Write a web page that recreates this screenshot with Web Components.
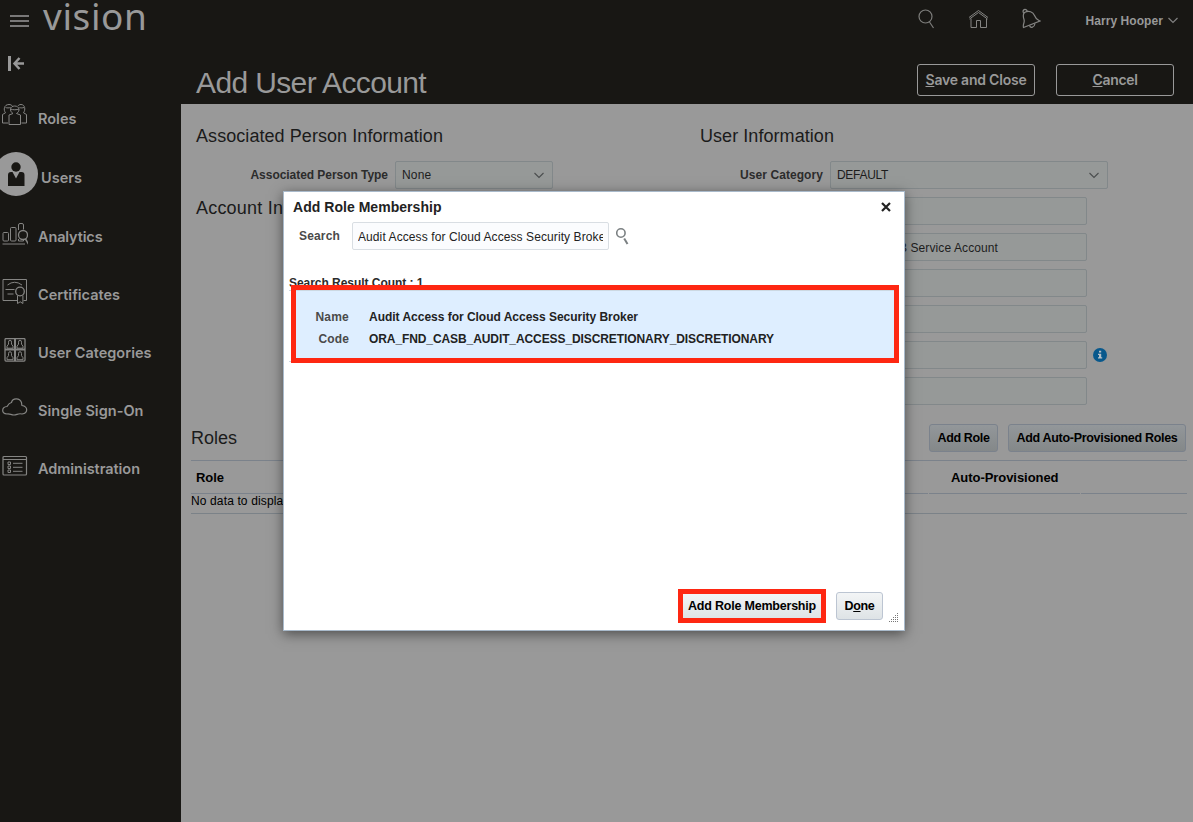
<!DOCTYPE html>
<html lang="en"><head><meta charset="utf-8"><title>Add User Account</title>
<style>
html,body{margin:0;height:100%;overflow:hidden;background:#181714}
body{font-family:"Liberation Sans",Arial,sans-serif;font-size:12px;color:#1b1b1b}
</style></head><body>
<security-console></security-console>
<script>
const define=(name,html,setup)=>customElements.define(name,class extends HTMLElement{
  connectedCallback(){
    if(this.shadowRoot)return;
    const t=document.createElement('template');t.innerHTML=typeof html==='function'?html(this):html;
    this.attachShadow({mode:'open'}).appendChild(t.content.cloneNode(true));
    if(setup)setup(this);
  }
});

/* A single-line label whose tracking is adjusted to a given width */
define('fit-text','<style>:host{display:inline-block;white-space:nowrap}span{display:inline-block}</style><span><slot></slot></span>',el=>{
  const w=parseFloat(el.getAttribute('w'));
  const s=el.shadowRoot.querySelector('span'),n=el.textContent.length;
  const nat=s.getBoundingClientRect().width;
  if(w&&nat){s.style.letterSpacing=((w-nat)/n)+'px';el.style.width=w+'px'}
});

const svg=(w,h,body,extra='')=>`<svg width="${w}" height="${h}" viewBox="0 0 ${w} ${h}" fill="none" stroke="#858583" stroke-width="1" stroke-linejoin="round" ${extra}>${body}</svg>`;
const person=(x,y)=>`<path d="M${x+2.500} ${y+4.5}V${y+2.5}a1.500 2 0 0 1 3 0V${y+4.5}L${x+7} ${y+6.500}V${y+8.500}H${x+1}V${y+6.500}Z"/>`;
const icons={
  roles:svg(28,24,'<path d="M7 21H1.500V12.500L4.500 10.800C2.300 8 2.800 2.500 8 2.500c1.600 0 2.700.6 3.300 1.500M20.500 21H25.500V12.500L22.500 10.800C24.700 8 24.200 2.500 20 2.500c-1.600 0-2.500.6-3 1.500"/><path d="M12 11.500C8 9 9 4 13.700 4s6 5 1.800 7.500l4 1.500v9.500H8V13Z"/><path d="M9.500 7c2 1 6.500 1 8.500 0M4.500 5.500c1.500.6 3.500.5 5 0M18.500 5.500c1.500.6 3 .5 4.500 0"/>'),
  analytics:svg(28,24,'<rect x="3" y="11.500" width="5.500" height="8.500" rx="1"/><rect x="10.500" y="6.500" width="5.500" height="13.500" rx="1"/><path d="M18.500 9V4q0-1.500 1.500-1.500h2q1.500 0 1.500 1.500v4.500M18.500 18v2h5v-1M2.500 23H25"/><circle cx="23" cy="14" r="4.500" stroke-width="1.300"/><path d="m25.500 18 3 5" stroke-width="1.500"/>'),
  certificates:svg(28,27,'<path d="M17 22.500H3V1.500H26.500v21H23.500"/><path d="M7.500 7q7-5.500 14.500 0M5.500 11.500h9M7.500 16h6"/><circle cx="20" cy="13.500" r="4.300" stroke-width="1.300"/><path d="M17.500 17.500v8l2.700-1.700 2.700 1.700v-8"/>'),
  categories:svg(28,24,'<rect x="5" y=".6" width="20" height="22.500" rx="1" stroke-width="1.300"/><path d="M15 1v22M5 11.500h20" stroke-width="2"/>'+person(6,1.700)+person(16,1.700)+person(6,13.200)+person(16,13.200)),
  cloud:svg(28,22,'<path d="M7 18C1 17.500 1.500 11 7 10.500 8.500 8 9 7 11.500 6.500 12.500 2 19.500 1.500 21.500 6.500c.3 1.500 0 2 .5 3 6 1 6.500 7.500 0 8.500-4-1-5 1-8 1s-4-1.500-7-1Z" stroke-width="1.200"/>'),
  admin:svg(28,22,'<rect x="3" y="1.500" width="23.500" height="18.500" rx="1" stroke-width="1.200"/><path d="M3 4.500h23.500"/><rect x="8" y="7" width="2.500" height="2.500"/><rect x="8" y="11" width="2.500" height="2.500"/><rect x="8" y="15" width="2.500" height="2.500"/><path d="M13 8.300h9.500M13 12.300h9.500M13 16.300h9.500"/>'),
  users:'<svg width="38" height="44" viewBox="0 0 38 44"><circle cx="16" cy="22" r="22" fill="#999"/><circle cx="16" cy="15" r="4.700" fill="#181714"/><path d="M8 34V23q0-3 3-3h1.500l3.500 6.500L19.500 20H21.500q3 0 3 3v11Z" fill="#181714"/></svg>'
};

define('nav-item',el=>`<style>
:host{display:grid;grid-template-columns:38px auto;justify-content:start;align-items:center;height:58.300px;color:#999;font:600 14.500px/20px Inter,"Open Sans",sans-serif}
.i{display:flex;margin-top:-6px}svg{display:block}:host([icon=users]) .t{padding:1px 0 0 3px}:host([icon=users]) .i{margin-top:-7px}:host([icon=roles]) .i{margin:-11px 0 0 1px}
:host([icon=roles]) .t{margin-top:-2px}:host([icon=analytics]) .t{margin-top:2px}:host([icon=cloud]) .i{margin-top:-8px}
</style><span class="i">${icons[el.getAttribute('icon')]}</span><span class="t"><slot></slot></span>`);

define('side-nav',`<style>
:host{display:block;width:181px}
.c{display:block;height:16px;margin:14px 0 0 8px}nav{padding-top:19.500px}
</style>
<svg class="c" width="17" height="16" viewBox="0 0 17 16" fill="none" stroke="#999"><path d="M1.500 1v15" stroke-width="3"/><path d="M16 8.500H7M11.500 3 6.500 8.500l5 5.500" stroke-width="2.500"/></svg>
<nav>
<nav-item icon="roles"><fit-text w="38.500">Roles</fit-text></nav-item>
<nav-item icon="users"><fit-text w="41">Users</fit-text></nav-item>
<nav-item icon="analytics"><fit-text w="64.500">Analytics</fit-text></nav-item>
<nav-item icon="certificates"><fit-text w="82">Certificates</fit-text></nav-item>
<nav-item icon="categories"><fit-text w="113.500">User Categories</fit-text></nav-item>
<nav-item icon="cloud"><fit-text w="105.500">Single Sign-On</fit-text></nav-item>
<nav-item icon="admin"><fit-text w="102">Administration</fit-text></nav-item>
</nav>`);

define('top-bar',`<style>
:host{display:flex;align-items:center;height:41px;padding:0 15px 0 10px;box-sizing:border-box;color:#999}
svg{display:block;flex:none}.logo{font:400 37px/32px "Noto Sans","Open Sans",sans-serif;margin:-9px auto 0 14px}
.search{margin:-4px 32px 0 0}.home{margin:-4px 32px 0 0}.bell{margin:-5px 45px 0 0}.user{font-weight:700;font-size:12px;margin-right:5px}
</style>
<svg width="19" height="14" viewBox="0 0 19 14" stroke="#999" stroke-width="1.500"><path d="M0 2h19M0 7h19M0 12h19"/></svg>
<div class="logo"><fit-text w="104.500">vision</fit-text></div>
<svg class="search" width="18" height="20" viewBox="0 0 18 20" fill="none" stroke="#7d7d7b" stroke-width="1.200"><circle cx="7.500" cy="7.500" r="6.500"/><path d="m11.500 13 4 6"/></svg>
<svg class="home" width="21" height="20" viewBox="0 0 21 20" fill="none" stroke="#858583"><path d="M1 8.500 10.500 1.500 20 8.500M1.500 10 10.500 3.500 19.500 10M3 9.500V18.500H8.500V11.500H12.500V18.500H18.500V9.500"/></svg>
<svg class="bell" width="20" height="21" viewBox="0 0 20 21" fill="none" stroke="#858583" stroke-width="1.200"><path d="M3.500 4.500C8 2 12 4 13.500 7.500c1.500 4 2.500 4 5.500 5.500L2.500 19.500C1.500 16 4 15 3 11.500 2 8.500 1.500 6.500 3.500 4.500Z"/><path d="M2.500 5C1 2 4.500-.5 6.500 3.500M8.500 17.500c1 3 5 2 5.500-2"/></svg>
<div class="user"><fit-text w="77.500">Harry Hooper</fit-text></div>
<svg width="10" height="7" viewBox="0 0 10 7" fill="none" stroke="#808080" stroke-width="1.200"><path d="m.5 1 4.500 4.500L9.500 1"/></svg>`);

define('outline-button',`<style>:host{display:flex;align-items:center;justify-content:center;width:118px;height:32px;box-sizing:border-box;border:1px solid #999;border-radius:3px;color:#999;font:600 14px/20px Inter,sans-serif}</style><slot></slot>`);
define('title-bar',`<style>
:host{display:flex;align-items:flex-start;height:63px;padding:0 19px 0 15px;box-sizing:border-box;color:#999;background:#181714}
h1{font:400 30px/36px "Liberation Sans",sans-serif;margin:24px auto 0 0}
.b{display:flex;gap:21px;margin-top:23px}
</style><h1><fit-text w="230">Add User Account</fit-text></h1><div class="b"><outline-button><fit-text w="101"><u>S</u>ave and Close</fit-text></outline-button><outline-button><fit-text w="45"><u>C</u>ancel</fit-text></outline-button></div>`);

define('field-box',el=>`<style>
:host{display:flex;align-items:center;justify-content:space-between;box-sizing:border-box;height:28px;border:1px solid #82888a;border-radius:2px;background:#969998;padding:0 7px 0 6px;color:#1d1d1d;font-size:12px}
svg{display:block}</style><slot></slot>${el.hasAttribute('select')?'<svg width="12" height="8" viewBox="0 0 12 8" fill="none" stroke="#4a4d4e" stroke-width="1.100"><path d="M1.500 2 6 6.500 10.500 2"/></svg>':''}`);

define('push-button',`<style>
:host{display:flex;align-items:center;justify-content:center;box-sizing:border-box;height:28px;border:1px solid var(--edge,#7b828c);border-radius:3px;background:linear-gradient(var(--from,#93979a),var(--to,#848889));color:#000;font-weight:700;font-size:12.500px}
</style><slot></slot>`);

define('person-form',`<style>
:host{display:grid;grid-template-columns:504px 1fr;padding:22px 0 0 15px;height:320px;box-sizing:border-box;align-items:start}
h2{font:400 18px/20px "Liberation Sans",sans-serif;margin:0;color:#1b1b1b}
.r{display:flex;align-items:center;margin-top:15px;height:28px;gap:7px}
.l{font-weight:700;color:#2c2c2c;width:192px;text-align:right}
.right .l{width:123px}.acc{margin-top:9px}
.stack{display:grid;gap:8px;margin:8px 0 0 130px}
.line{display:flex;align-items:center;gap:6px}.line field-box{width:257px}
</style>
<section><h2><fit-text w="247">Associated Person Information</fit-text></h2>
<div class="r"><span class="l"><fit-text w="137.500">Associated Person Type</fit-text></span><field-box select style="width:158px"><fit-text w="29.500">None</fit-text></field-box></div>
<h2 class="acc"><fit-text w="164">Account Information</fit-text></h2></section>
<section class="right"><h2><fit-text w="134">User Information</fit-text></h2>
<div class="r"><span class="l"><fit-text w="83">User Category</fit-text></span><field-box select style="width:278px"><fit-text w="51">DEFAULT</fit-text></field-box></div>
<div class="stack"><div class="line"><field-box></field-box></div>
<div class="line"><field-box><span style="padding:2px 0 0 37px"><fit-text w="124">CASB Service Account</fit-text></span></field-box></div>
<div class="line"><field-box></field-box></div><div class="line"><field-box></field-box></div>
<div class="line"><field-box></field-box><svg width="14" height="14" viewBox="0 0 14 14"><circle cx="7" cy="7" r="7" fill="#08588c"/><path d="M6 2.800h2.200v1.700H6ZM5 5.700h3.200v3.600h1v1.200H5V9.300h1V6.900H5Z" fill="#b6c0c8"/></svg></div>
<div class="line"><field-box></field-box></div></div></section>`);

define('roles-table',`<style>
:host{display:block;padding:0 6px 0 10px}
header{display:flex;gap:10px;height:28px;align-items:center;padding-right:1px}
h2{font:400 18px/20px "Liberation Sans",sans-serif;margin:0 auto 0 0;color:#1b1b1b}
.head{display:grid;grid-template-columns:737px 151px 1fr;column-gap:1px;border-top:1px solid #7b828b;margin-top:8px;font-weight:700;font-size:13px;color:#000}
.head span{height:32px;line-height:33px;border-bottom:1px solid #7b828b}
.empty{height:19px;line-height:15px;border-bottom:1px solid #7b8288;color:#000;font-size:12px}
</style>
<header><h2><fit-text w="46">Roles</fit-text></h2><push-button style="width:69px"><fit-text w="52">Add Role</fit-text></push-button><push-button style="width:178px"><fit-text w="161">Add Auto-Provisioned Roles</fit-text></push-button></header>
<div class="head"><span style="padding-left:5px"><fit-text w="28">Role</fit-text></span><span style="padding-left:22px;box-sizing:content-box;width:129px"><fit-text w="107.500">Auto-Provisioned</fit-text></span><span></span></div>
<div class="empty"><fit-text w="101">No data to display.</fit-text></div>`);

define('role-dialog',`<style>
:host{position:absolute;left:283px;top:191px;width:622px;height:440px;box-sizing:border-box;border:1px solid #a9bacb;background:#fff;box-shadow:0 3px 12px rgba(0,0,0,.5);display:flex;flex-direction:column}
.t{display:flex;align-items:center;justify-content:space-between;height:30px;padding:0 13px 0 9px;font-weight:700;font-size:14px;color:#222}
.s{display:flex;align-items:center;height:28px;padding-left:15px;font-weight:700;color:#4a4a4a}
.in{width:257px;height:28px;box-sizing:border-box;border:1px solid #d9dee3;border-radius:2px;background:#fbfcfe;margin:0 7px 0 12px;padding:0 5px;font-weight:400;color:#222;line-height:29px}
.clip{overflow:hidden;white-space:nowrap;height:28px}
.count{margin:26px 0 0 5px;height:14px;line-height:14px;font-weight:700;color:#2b2b2b}
.result{position:relative;margin:0 7px 0 5px;height:72px;box-sizing:border-box;background:#deeeff;border:1px solid #ccd8e2;border-width:1px 0;display:grid;grid-template-columns:60px 1fr;column-gap:20px;grid-auto-rows:22px;align-content:start;padding-top:15px;font-weight:700;line-height:22px;color:#222}
.result b{text-align:right;color:#4a4a4a}
.mark{position:absolute;box-sizing:border-box;border:5px solid #fe2712;pointer-events:none}
.result:before{content:"";position:absolute;left:0;width:2px;top:0;bottom:0;background:#fff}
footer{display:flex;align-items:flex-start;justify-content:flex-end;margin-top:auto;height:38px;gap:13px}
push-button{--edge:#bcc5d2;--from:#f3f5f6;--to:#dee3e6}
.p{position:relative}svg{display:block}
</style>
<div class="t"><fit-text w="148.500">Add Role Membership</fit-text><svg width="10" height="10" viewBox="0 0 10 10" stroke="#222" stroke-width="2.200"><path d="m1 1 8 8M9 1 1 9"/></svg></div>
<div class="s"><span style="margin-top:-1px"><fit-text w="41">Search</fit-text></span><div class="in"><div class="clip"><fit-text w="251.500">Audit Access for Cloud Access Security Broker</fit-text></div></div>
<svg width="14" height="18" viewBox="0 0 14 18" fill="none" stroke="#7b8082"><circle cx="4.900" cy="6" r="4.200" stroke-width="1.600"/><path d="m8.200 11.500 3.300 5.500" stroke-width="2"/></svg></div>
<div class="count"><fit-text w="134.500">Search Result Count : 1</fit-text></div>
<div class="result"><b><fit-text w="33.500">Name</fit-text></b><span><fit-text w="269">Audit Access for Cloud Access Security Broker</fit-text></span><b><fit-text w="30.500">Code</fit-text></b><span><fit-text w="405">ORA_FND_CASB_AUDIT_ACCESS_DISCRETIONARY_DISCRETIONARY</fit-text></span><i class="mark" style="left:2px;top:-6px;width:608px;height:78px"></i></div>
<footer><div class="p"><push-button style="width:142px"><fit-text w="128">Add Role Membership</fit-text></push-button><i class="mark" style="left:-3px;top:-3px;width:148px;height:34px"></i></div>
<push-button style="width:47px"><fit-text w="30">D<u>o</u>ne</fit-text></push-button>
<svg width="10" height="10" viewBox="0 0 10 10" fill="#777" style="margin:21px 5px 0 -7px"><path d="M8 0h1v1H8ZM8 2h1v1H8ZM6 2h1v1H6ZM8 4h1v1H8ZM6 4h1v1H6ZM4 4h1v1H4ZM8 6h1v1H8ZM6 6h1v1H6ZM4 6h1v1H4ZM2 6h1v1H2ZM8 8h1v1H8ZM6 8h1v1H6ZM4 8h1v1H4ZM2 8h1v1H2ZM0 8h1v1H0Z"/></svg></footer>`);

define('security-console',`<style>
:host{display:grid;position:relative;width:1193px;height:822px;grid-template:41px 1fr/181px 1fr;background:#181714;overflow:hidden}
top-bar{grid-column:1/3}main{display:flex;flex-direction:column;background:#999;min-width:0}
</style><top-bar></top-bar><side-nav></side-nav><main><title-bar></title-bar><person-form></person-form><roles-table></roles-table></main><role-dialog></role-dialog>`);
</script></body></html>
